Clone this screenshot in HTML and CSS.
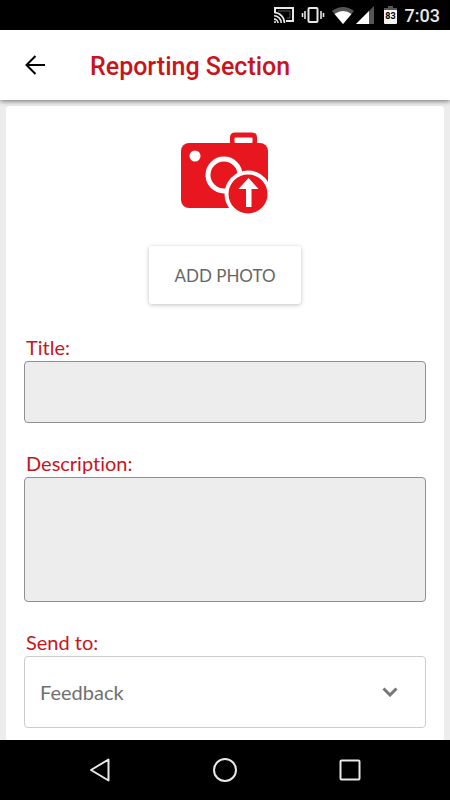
FILE: index.html
```html
<!DOCTYPE html>
<html lang="en">
<head>
<meta charset="utf-8">
<meta name="viewport" content="width=device-width, initial-scale=1">
<title>Reporting Section</title>
<link rel="stylesheet" href="styles.css">
</head>
<body>
<div class="status">
  <svg class="cast" width="20" height="18" viewBox="0 0 20 18" fill="none" stroke="#e8e8e8" stroke-width="2">
    <path d="M1 6V2H19V15H12"/>
    <path d="M4 5H16V12H13" stroke="#555" stroke-width="1"/>
    <path d="M0 6.500A10.500 10.500 0 0 1 10.500 17M0 9.800A7.200 7.200 0 0 1 7.200 17M0 13.100A4 4 0 0 1 4 17" stroke-width="1.600"/>
    <circle cx="1" cy="16" r="1" fill="#e8e8e8" stroke="none"/>
  </svg>
  <svg class="vibrate" width="24" height="18" viewBox="0 0 24 18" fill="none" stroke="#e8e8e8" stroke-width="2">
    <rect x="7.500" y="2" width="9" height="14" rx="1"/>
    <path d="M4 5V13M20 5V13M1.500 7V11M22.500 7V11" stroke-width="1.600"/>
  </svg>
  <svg class="wifi" width="22" height="18" viewBox="0 0 22 18">
    <path d="M0 5Q11-3 22 5L11 18Z" fill="#555"/>
    <path d="M2.500 8Q11 2 19.500 8L11 18Z" fill="#fff"/>
  </svg>
  <svg class="signal" width="18" height="18" viewBox="0 0 18 18">
    <path d="M18 0V18H0Z" fill="#555"/>
    <path d="M13 5V18H0Z" fill="#fff"/>
  </svg>
  <svg class="battery" width="13" height="18" viewBox="0 0 13 18">
    <path d="M4 0H9V2H13V5H0V2H4Z" fill="#555"/>
    <path d="M0 4H13V17Q13 18 12 18H1Q0 18 0 17Z" fill="#f4f4f4"/>
    <text x="6.500" y="13" text-anchor="middle" class="battery-level">83</text>
  </svg>
  <span class="time">7:03</span>
</div>

<header class="appbar">
  <button class="back" type="button" aria-label="Back">
    <svg width="20" height="20" viewBox="0 0 20 20" fill="none" stroke="#000" stroke-width="2"><path d="M20 10H2M10.500 1L1.500 10L10.500 19"/></svg>
  </button>
  <h1>Reporting Section</h1>
</header>

<main class="content">
  <form class="card">
    <svg class="camera" width="88" height="82" viewBox="0 0 88 82" fill="#e8171f">
      <rect x="0" y="11" width="87" height="65" rx="8"/>
      <path d="M49 13V5.500Q49 .5 54 .5H71Q76 .5 76 5.500V13Z"/>
      <rect x="53.500" y="5.500" width="18" height="5.500" rx="1" fill="#fff"/>
      <circle cx="14" cy="24" r="5.500" fill="#fff"/>
      <circle cx="43" cy="43" r="16" fill="none" stroke="#fff" stroke-width="5"/>
      <circle cx="67" cy="62" r="23.500" fill="#fff"/>
      <circle cx="67" cy="62" r="19.500"/>
      <path d="M67.500 46L77.500 57H70.500V75H65V57H57.500Z" fill="#fff"/>
    </svg>
    <button class="add" type="button">ADD PHOTO</button>

    <div class="field">
      <label for="title">Title:</label>
      <input id="title" class="box" type="text">
    </div>
    <div class="field">
      <label for="description">Description:</label>
      <textarea id="description" class="box tall"></textarea>
    </div>
    <div class="field">
      <label for="send">Send to:</label>
      <div class="picker">
        <select id="send"><option>Feedback</option></select>
        <svg class="chevron" width="16" height="10" viewBox="0 0 16 10" fill="none" stroke="#777" stroke-width="3"><path d="M1.500 1.500L8 8L14.500 1.500"/></svg>
      </div>
    </div>
  </form>
</main>

<nav class="navbar">
  <button type="button" aria-label="Back">
    <svg width="24" height="24" viewBox="0 0 24 24" fill="none" stroke="#e8e8e8" stroke-width="2" stroke-linejoin="round"><path d="M20.500 1.500V22.500L3 12Z"/></svg>
  </button>
  <button type="button" aria-label="Home">
    <svg width="24" height="24" viewBox="0 0 24 24" fill="none" stroke="#e8e8e8" stroke-width="2"><circle cx="12" cy="12" r="11"/></svg>
  </button>
  <button type="button" aria-label="Recent apps">
    <svg width="24" height="24" viewBox="0 0 24 24" fill="none" stroke="#e8e8e8" stroke-width="2"><rect x="2.500" y="2.500" width="19" height="19" rx="1"/></svg>
  </button>
</nav>
</body>
</html>
```
FILE: styles.css
```css
* { box-sizing: border-box; }

body {
  margin: 0;
  min-height: 100vh;
  display: flex;
  flex-direction: column;
  background: #ededed;
  font-family: Lato, sans-serif;
  font-variant-ligatures: none;
}

button {
  border: 0;
  padding: 0;
  background: none;
  font: inherit;
}

svg { display: block; flex: none; }

.status {
  height: 30px;
  padding: 0 10px;
  display: flex;
  align-items: center;
  justify-content: flex-end;
  background: #000;
  color: #e8e8e8;
}

.vibrate { margin-left: 7px; }
.wifi { margin-left: 7px; }
.signal { margin-left: 2px; }
.battery { margin-left: 10px; }
.battery-level { font: bold 9px Roboto, sans-serif; fill: #000; }

.time {
  margin-left: 8px;
  padding-top: 2px;
  font: 500 18px/28px Roboto, sans-serif;
}

.appbar {
  position: relative;
  height: 70px;
  padding: 0 24px;
  display: flex;
  align-items: center;
  gap: 44px;
  background: #fff;
  box-shadow: 0 1px 5px rgba(0, 0, 0, 0.55);
}

.back { padding: 1px; }

h1 {
  margin: 0;
  padding-top: 4px;
  font: 500 25px/32px Roboto, sans-serif;
  color: #c8141c;
}

.content {
  flex: 1;
  display: flex;
  padding: 6px 6px 0;
}

.card {
  flex: 1;
  display: flex;
  flex-direction: column;
  padding: 26px 18px 12px;
  border-radius: 4px 4px 0 0;
  background: #fff;
}

.camera { align-self: center; }

.add {
  align-self: center;
  width: 152px;
  height: 58px;
  margin: 32px 0 31px;
  border-radius: 3px;
  background: #fff;
  box-shadow: 0 1px 4px rgba(0, 0, 0, 0.25);
  font-size: 17px;
  color: #666;
}

.field {
  display: flex;
  flex-direction: column;
}

.field + .field { margin-top: 28px; }

label {
  padding: 0 0 2px 2px;
  font-size: 20px;
  line-height: 24px;
  color: #c8141c;
}

.box {
  display: block;
  width: 100%;
  height: 62px;
  padding: 12px 16px;
  border: 1px solid #909090;
  border-radius: 4px;
  background: #ededed;
  font: 20px/26px Lato, sans-serif;
  resize: none;
}

.tall { height: 125px; }

.picker { position: relative; }

select {
  display: block;
  width: 100%;
  height: 72px;
  padding: 0 15px;
  border: 1px solid #ccc;
  border-radius: 4px;
  background: #fff;
  appearance: none;
  font: 20px/26px Lato, sans-serif;
  color: #707070;
}

.chevron {
  position: absolute;
  top: 31px;
  right: 28px;
  pointer-events: none;
}

.navbar {
  height: 60px;
  display: flex;
  align-items: center;
  justify-content: center;
  gap: 101px;
  background: #000;
}
```
